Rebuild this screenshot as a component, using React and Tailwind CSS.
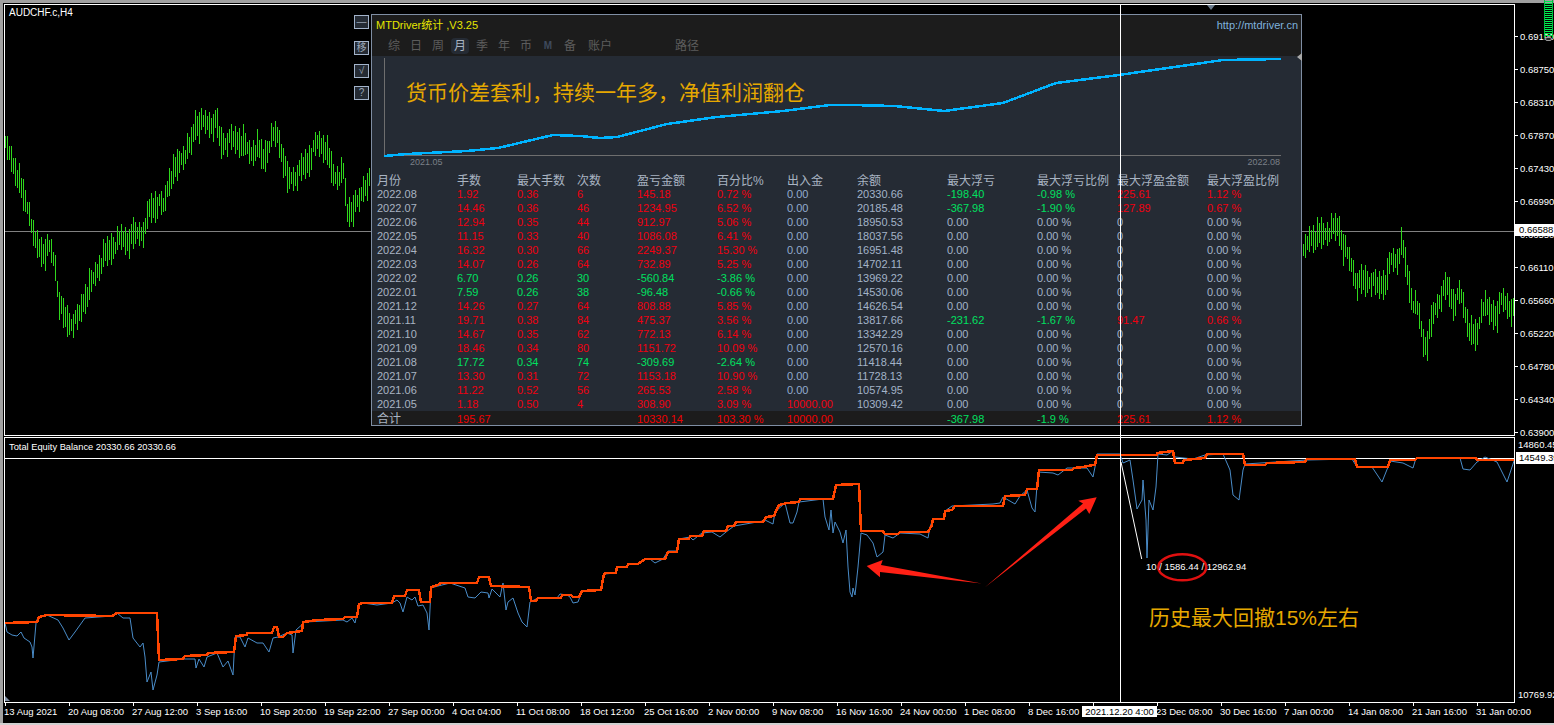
import React from "react";

const axisMain = ["0.69190", "0.68750", "0.68310", "0.67870", "0.67430", "0.66990", "0.66550", "0.66110", "0.65660", "0.65220", "0.64780", "0.64340", "0.63900"];
const times = ["13 Aug 2021", "20 Aug 08:00", "27 Aug 12:00", "3 Sep 16:00", "10 Sep 20:00", "19 Sep 22:00", "27 Sep 00:00", "4 Oct 04:00", "11 Oct 08:00", "18 Oct 12:00", "25 Oct 16:00", "2 Nov 00:00", "9 Nov 08:00", "16 Nov 16:00", "24 Nov 00:00", "1 Dec 08:00", "8 Dec 16:00", "", "23 Dec 08:00", "30 Dec 16:00", "7 Jan 00:00", "14 Jan 08:00", "21 Jan 16:00", "31 Jan 00:00"];

const headers = ["月份", "手数", "最大手数", "次数", "盈亏金额", "百分比%", "出入金", "余额", "最大浮亏", "最大浮亏比例", "最大浮盈金额", "最大浮盈比例"];

// month, lots, max lots, count, profit, pct, cash, balance, float loss, loss %, float win, win %
const rows = [
  ["2022.08", "1.92", "0.36", "6", "145.18", "0.72 %", "0.00", "20330.66", "-198.40", "-0.98 %", "225.61", "1.12 %"],
  ["2022.07", "14.46", "0.36", "46", "1234.95", "6.52 %", "0.00", "20185.48", "-367.98", "-1.90 %", "127.89", "0.67 %"],
  ["2022.06", "12.94", "0.35", "44", "912.97", "5.06 %", "0.00", "18950.53"],
  ["2022.05", "11.15", "0.33", "40", "1086.08", "6.41 %", "0.00", "18037.56"],
  ["2022.04", "16.32", "0.30", "66", "2249.37", "15.30 %", "0.00", "16951.48"],
  ["2022.03", "14.07", "0.26", "64", "732.89", "5.25 %", "0.00", "14702.11"],
  ["2022.02", "6.70", "0.26", "30", "-560.84", "-3.86 %", "0.00", "13969.22"],
  ["2022.01", "7.59", "0.26", "38", "-96.48", "-0.66 %", "0.00", "14530.06"],
  ["2021.12", "14.26", "0.27", "64", "808.88", "5.85 %", "0.00", "14626.54"],
  ["2021.11", "19.71", "0.38", "84", "475.37", "3.56 %", "0.00", "13817.66", "-231.62", "-1.67 %", "91.47", "0.66 %"],
  ["2021.10", "14.67", "0.35", "62", "772.13", "6.14 %", "0.00", "13342.29"],
  ["2021.09", "18.46", "0.34", "80", "1151.72", "10.09 %", "0.00", "12570.16"],
  ["2021.08", "17.72", "0.34", "74", "-309.69", "-2.64 %", "0.00", "11418.44"],
  ["2021.07", "13.30", "0.31", "72", "1153.18", "10.90 %", "0.00", "11728.13"],
  ["2021.06", "11.22", "0.52", "56", "265.53", "2.58 %", "0.00", "10574.95"],
  ["2021.05", "1.18", "0.50", "4", "308.90", "3.09 %", "10000.00", "10309.42"],
];

const tableCols = "grid grid-cols-[80px_60px_60px_60px_80px_70px_70px_90px_90px_80px_90px_1fr] pl-[5px]";

// candle centre line, picked off the reference
const leftMid = [[15,440],[30,470],[50,520],[65,580],[90,640],[100,720],[125,755],[150,745],[165,800],[175,900],[190,950],[208,970],[232,960],[250,900],[270,860],[290,810],[310,770],[345,730],[365,715],[385,720],[410,700],[435,690],[445,630],[470,610],[490,620],[505,540],[525,510],[545,470],[570,440],[585,370],[610,370],[650,370],[660,430],[690,420],[720,420],[750,460],[770,440],[790,480],[810,420],[830,400],[850,480],[860,540],[885,530],[910,500],[925,480],[950,430],[975,440],[1000,530],[1030,520],[1040,640],[1060,620],[1075,610],[1090,560],[1110,540]].map(([x, y]) => [x / 3, y / 3]);
const rightMid = [[40,190],[60,140],[80,140],[110,125],[145,110],[160,170],[185,230],[200,280],[240,270],[260,290],[290,270],[300,210],[320,210],[335,160],[350,250],[365,330],[385,370],[400,460],[410,460],[430,370],[450,320],[470,290],[490,340],[510,310],[525,370],[545,440],[560,440],[575,340],[600,370],[620,370],[635,330],[660,350],[672,370]].map(([x, y]) => [1290 + x / 3, 190 + y / 3]);

function candles(mid) {
  let d = "";
  // bars sit on odd pixel columns
  const start = Math.floor(mid[0][0]) | 1;
  const end = mid[mid.length - 1][0];
  let i = 0;
  for (let x = start; x < end; x += 2) {
    let k = 0;
    while (k < mid.length - 2 && mid[k + 1][0] < x) k++;
    const [x0, y0] = mid[k];
    const [x1, y1] = mid[k + 1];
    const y = y0 + ((y1 - y0) * (x - x0)) / (x1 - x0);
    const half = 6 + ((i * 17) % 11);
    const off = (((i * 29) % 7) - 3) * 1.4;
    d += `M${x + 0.5} ${Math.round(y + off - half)}V${Math.round(y + off + half)}`;
    i++;
  }
  return d;
}

const curve = "384,156 407,154 467,151 498,148 553,135 580,136 600,138 617,137 667,124 717,117 783,111 830,105 850,105 895,106 944,111 1003,103 1056,83 1119,75 1223,60 1281,59";

const balance = "5,623 37,622 39,617 47,615 112,616 117,613 157,613 159,660 183,659 185,656 207,655 208,653 234,652 236,636 247,635 247,633 272,633 274,627 277,627 279,637 283,637 287,633 302,631 303,622 318,620 343,619 345,617 357,617 359,604 363,603 392,603 394,596 405,596 407,590 419,590 421,602 430,602 431,587 438,585 441,583 477,583 479,577 489,577 491,586 529,587 531,601 536,601 538,598 561,598 562,595 571,595 573,597 579,597 582,591 601,590 604,574 606,573 616,573 617,567 627,567 628,564 638,564 645,559 665,559 668,552 677,552 679,539 689,539 690,536 702,536 704,531 726,531 728,526 734,526 736,522 763,522 766,517 774,516 776,511 779,505 787,503 799,502 800,499 833,499 836,485 859,484 861,531 883,531 885,534 898,534 900,532 928,532 932,525 933,519 944,519 945,511 952,510 955,506 1003,506 1005,496 1025,495 1027,489 1037,489 1039,470 1072,470 1074,468 1083,467 1093,465 1095,465 1097,455 1157,455 1157,453 1173,451 1175,463 1183,463 1184,460 1205,458 1207,454 1243,454 1245,465 1265,465 1267,463 1305,462 1307,459 1355,459 1357,467 1388,467 1390,460 1415,460 1417,458 1476,458 1477,460 1514,460";

const equity = "5,623 7,632 12,635 17,636 21,632 24,638 30,642 32,647 33,658 36,623 38,617 47,615 58,620 63,628 69,640 75,632 85,618 112,616 117,613 123,618 130,618 133,638 140,647 143,643 145,657 147,682 151,672 153,690 157,675 159,662 183,659 195,659 196,668 199,659 204,667 207,657 217,653 223,667 228,661 233,675 235,637 240,637 245,647 248,638 257,643 263,643 269,652 273,638 278,637 287,633 292,635 293,653 296,630 305,622 343,620 347,622 352,618 355,623 359,604 363,603 377,605 392,603 397,600 400,603 403,612 407,597 412,600 415,597 418,606 423,605 427,613 429,630 431,588 438,586 450,583 465,588 468,597 475,598 481,592 488,593 489,598 492,589 500,597 503,583 506,610 508,602 513,598 518,613 522,622 527,627 530,602 538,598 557,598 560,594 567,595 570,597 573,603 578,602 582,591 601,590 604,574 616,573 617,567 627,567 628,564 638,564 645,559 650,559 655,563 663,559 668,551 677,551 679,539 690,537 693,540 702,533 712,532 720,537 726,532 734,526 763,521 765,520 773,524 775,512 785,503 790,523 793,523 797,512 799,502 823,499 825,517 829,530 831,510 833,533 835,522 840,532 843,543 846,530 848,567 850,592 852,597 853,588 855,595 858,567 861,533 867,535 873,543 877,557 883,552 885,535 893,538 900,533 920,534 928,538 930,527 933,519 944,519 945,511 952,506 993,504 1000,503 1003,497 1015,504 1020,496 1027,490 1032,508 1035,512 1038,472 1053,473 1058,475 1067,468 1087,468 1093,477 1096,462 1097,454 1120,454 1123,463 1130,460 1133,480 1137,509 1142,500 1143,480 1146,520 1147,558 1149,500 1153,510 1156,487 1158,454 1167,455 1173,451 1175,457 1193,459 1205,455 1223,454 1230,470 1233,495 1239,500 1243,470 1245,464 1307,460 1352,459 1357,467 1372,467 1382,482 1388,467 1390,461 1403,463 1413,468 1416,458 1460,458 1463,469 1470,470 1477,462 1485,457 1497,462 1507,482 1514,461";

function AxisLabel({ text }) {
  return (
    <div className="flex items-center h-[33px]">
      <span className="w-[3px] h-px bg-white" />
      <span className="ml-[2px]">{text}</span>
    </div>
  );
}

function SideButton({ children, className }) {
  return (
    <div className={`w-[15px] h-[14px] flex items-center justify-center border border-[#a3b3ca] bg-[#252b34] text-[10px] leading-none text-[#9aa5b5] ${className}`}>
      {children}
    </div>
  );
}

function Tab({ children, w = "w-[22px]", className = "" }) {
  return <div className={`${w} text-center ${className}`}>{children}</div>;
}

function StatRow({ row }) {
  const negative = row[4].startsWith("-");
  const tone = negative ? "text-[#00e060]" : "text-[#f00010]";
  const cash = row[6] === "0.00" ? "text-[#93abcf]" : "text-[#f00010]";
  const hasFloat = row.length > 8;
  return (
    <div className={`${tableCols} h-[14px] leading-[14px]`}>
      <div className="text-[#a9b4c2]">{row[0]}</div>
      <div className={tone}>{row[1]}</div>
      <div className={tone}>{row[2]}</div>
      <div className={tone}>{row[3]}</div>
      <div className={tone}>{row[4]}</div>
      <div className={tone}>{row[5]}</div>
      <div className={cash}>{row[6]}</div>
      <div className="text-[#a3b3c8]">{row[7]}</div>
      <div className={hasFloat ? "text-[#00e060]" : "text-[#a3b3c8]"}>{hasFloat ? row[8] : "0.00"}</div>
      <div className={hasFloat ? "text-[#00e060]" : "text-[#a3b3c8]"}>{hasFloat ? row[9] : "0.00 %"}</div>
      <div className={hasFloat ? "text-[#f00010]" : "text-[#a3b3c8]"}>{hasFloat ? row[10] : "0"}</div>
      <div className={hasFloat ? "text-[#f00010]" : "text-[#a3b3c8]"}>{hasFloat ? row[11] : "0.00 %"}</div>
    </div>
  );
}

function StatsPanel() {
  return (
    <div className="absolute left-[371px] top-[14px] w-[931px] h-[412px] border border-[#7f8ea3] bg-[#252b34] flex flex-col text-[11px]">
      {/* Header */}
      <div className="h-[41px] bg-[#1c1c1c] shrink-0">
        <div className="h-[21px] pl-[4px] pr-[3px] flex items-center justify-between">
          <span className="text-[#e6e600] text-[11px]">MTDriver统计 ,V3.25</span>
          <span className="text-[#7fb2dc] text-[11px]">http://mtdriver.cn</span>
        </div>
        <div className="flex items-center mt-[2px] pl-[11px] text-[12px] leading-[16px] text-[#5c5c5c]">
          <Tab>综</Tab>
          <Tab>日</Tab>
          <Tab>周</Tab>
          <Tab><span className="inline-block px-[3px] rounded-sm bg-[#252b34] text-[#a9b4c2]">月</span></Tab>
          <Tab>季</Tab>
          <Tab>年</Tab>
          <Tab>币</Tab>
          <Tab className="text-[10px] font-bold text-[#3f4a5c]">M</Tab>
          <Tab>备</Tab>
          <Tab w="w-[38px]">账户</Tab>
          <Tab w="w-[24px]" className="ml-[56px]">路径</Tab>
        </div>
      </div>

      {/* Curve */}
      <div className="relative h-[101px] shrink-0">
        <svg className="block" width="929" height="101" viewBox="372 56 929 101">
          <path d="M384.5 58V155.5H1281" fill="none" stroke="#6e6e6e" />
          <polyline points={curve} fill="none" stroke="#00b4ff" strokeWidth="2.5" shapeRendering="crispEdges" />
        </svg>
        <div className="absolute left-[34px] top-[23px] text-[21px] leading-[28px] text-[#e6a800] whitespace-nowrap">
          货币价差套利，持续一年多，净值利润翻仓
        </div>
      </div>
      <div className="h-[11px] shrink-0 pl-[38px] pr-[21px] flex justify-between text-[9px] leading-[11px] text-[#7b8088]">
        <span>2021.05</span>
        <span>2022.08</span>
      </div>

      {/* Table */}
      <div className={`${tableCols} mt-[6px] h-[13px] shrink-0 text-[12px] leading-[14px] text-[#a9b4c2]`}>
        {headers.map((h) => <div key={h} className="whitespace-nowrap">{h}</div>)}
      </div>
      {rows.map((r) => <StatRow key={r[0]} row={r} />)}
      <div className={`${tableCols} h-[14px] pt-px leading-[14px] bg-[#1c1c1c] text-[#f00000]`}>
        <div className="text-[12px] text-[#a9b4c2]">合计</div>
        <div>195.67</div>
        <div />
        <div />
        <div>10330.14</div>
        <div>103.30 %</div>
        <div>10000.00</div>
        <div />
        <div className="text-[#00e060]">-367.98</div>
        <div className="text-[#00e060]">-1.9 %</div>
        <div>225.61</div>
        <div>1.12 %</div>
      </div>
    </div>
  );
}

function Gauge() {
  const ticks = [];
  for (let y = 1; y < 37; y += 2) ticks.push(<path key={y} d={`M1 ${y + 0.5}H8`} stroke="#00f050" />);
  return (
    <svg className="absolute left-[1544px] top-0" width="9" height="42" viewBox="0 0 9 42">
      <path d="M0.5 0V38M8.5 0V38" stroke="#00c040" />
      {ticks}
      <rect x="1.5" y="37.5" width="6" height="3" rx="1.5" fill="#222" stroke="#9a9a9a" />
    </svg>
  );
}

export default function App() {
  return (
    <div className="relative w-[1554px] h-[725px] overflow-hidden bg-black text-white text-[9.5px] font-['Liberation_Sans','Noto_Sans_CJK_SC',sans-serif] flex flex-col">
      <div className="h-[3px] bg-[#a0a0a0] shrink-0" />
      <div className="flex-1 flex flex-col min-h-0 border-l-[3px] border-[#a0a0a0] pl-px pt-px pb-0">
        {/* Price chart */}
        <div className="flex h-[432px] shrink-0">
          <div className="relative w-[1511px] border border-white">
            <svg className="block" width="1509" height="430" viewBox="5 5 1509 430">
              <path d="M5 231.5H1514" stroke="#808080" />
              <path d={candles(leftMid) + candles(rightMid)} stroke="#2fd61c" fill="none" shapeRendering="crispEdges" />
            </svg>
            <div className="absolute left-[4px] top-[2px] text-[10px] leading-[12px] text-white">AUDCHF.c,H4</div>
          </div>
          <div className="relative flex-1 pt-[16px] leading-none whitespace-nowrap">
            {axisMain.map((t) => <AxisLabel key={t} text={t} />)}
            <div className="absolute left-0 top-[220px] w-[39px] h-[12px] pl-[4px] bg-white text-black leading-[12px]">0.66588</div>
          </div>
        </div>

        {/* Equity chart */}
        <div className="flex h-[266px] mt-px shrink-0">
          <div className="relative w-[1511px] border border-white">
            <svg className="block" width="1509" height="264" viewBox="5 438 1509 264">
              <path d="M5 458.5H1514" stroke="#ffffff" />
              <polyline points={equity} fill="none" stroke="#4a8cc8" />
              <polyline points={balance} fill="none" stroke="#ff4500" strokeWidth="2.5" shapeRendering="crispEdges" />
              <path d="M1121 462L1141.7 559" stroke="#ffffff" fill="none" />
              <polygon points="866.7,566 882.7,560 881,565 981.7,583.5 880,572 880,577.3" fill="#ff2015" />
              <polygon points="1096.7,497.3 1078.3,500.7 1083,503.5 985,587.3 1086,508.5 1089.3,514" fill="#ff2015" />
              <ellipse cx="1182.3" cy="567.3" rx="24" ry="13" fill="none" stroke="#e01010" strokeWidth="2.5" />
              <path d="M5 701V696L10 701Z" fill="#7f8ea3" />
            </svg>
            <div className="absolute left-[4px] top-[3px] text-[9.3px] leading-[12px] whitespace-nowrap">Total Equity Balance 20330.66 20330.66</div>
            <div className="absolute left-[1141px] top-[123px] leading-[12px] whitespace-nowrap">10 / 1586.44 / 12962.94</div>
            <div className="absolute left-[1144px] top-[166px] text-[21px] leading-[28px] text-[#e6a800] whitespace-nowrap">历史最大回撤15%左右</div>
          </div>
          <div className="relative flex-1 whitespace-nowrap leading-[12px]">
            <div className="pl-[3px] pt-[2px]">14860.45</div>
            <div className="absolute left-[1px] top-[15px] w-[38px] h-[12px] pl-[3px] bg-white text-black">14549.39</div>
            <div className="absolute left-[3px] top-[252px]">10769.92</div>
          </div>
        </div>

        {/* Time axis */}
        <div className="relative flex h-[20px] shrink-0 whitespace-nowrap">
          {times.map((t, i) => (
            <div key={i} className="w-[64px] shrink-0 relative">
              <div className="w-px h-[3px] bg-white ml-[1px]" />
              <div className="leading-[12px]">{t}</div>
            </div>
          ))}
          <div className="absolute left-[1078px] top-[3px] w-[75px] h-[11px] bg-white text-black text-center leading-[11px]">2021.12.20 4:00</div>
        </div>
      </div>
      <div className="h-[2px] bg-[#d0d0d0] shrink-0" />

      {/* Overlays */}
      <StatsPanel />
      <div className="absolute left-[354px] top-[15px] flex flex-col">
        <SideButton>—</SideButton>
        <SideButton className="mt-[12px]">移</SideButton>
        <SideButton className="mt-[9px]">√</SideButton>
        <SideButton className="mt-[8px]">?</SideButton>
      </div>
      <div className="absolute left-[1120px] top-[5px] w-px h-[697px] bg-white" />
      <svg className="absolute left-[1207px] top-[5px]" width="8" height="5" viewBox="0 0 8 5"><path d="M0 0H8L4 5Z" fill="#6b7b8c" /></svg>
      <svg className="absolute left-[1297px] top-[53px]" width="5" height="8" viewBox="0 0 5 8"><path d="M5 0V8L0 4Z" fill="#a8a8a8" /></svg>
      <Gauge />
    </div>
  );
}
